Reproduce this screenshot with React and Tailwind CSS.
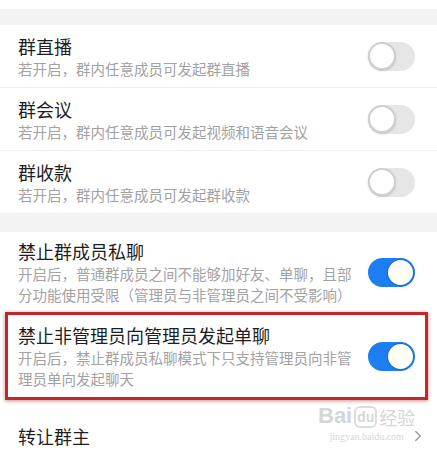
import { ChevronRight } from "lucide-react";

const rows = [
  { title: "群直播", desc: ["若开启，群内任意成员可发起群直播"], h: "h-[63px]" },
  { title: "群会议", desc: ["若开启，群内任意成员可发起视频和语音会议"], h: "h-[63px]" },
  { title: "群收款", desc: ["若开启，群内任意成员可发起群收款"], h: "h-[62px]", last: true },
];

function Toggle({ on }) {
  return on ? (
    <div className="w-[47px] h-[29px] rounded-full bg-[#1c7ef0] flex items-center justify-end pr-[2px] shrink-0">
      <div className="w-[25px] h-[25px] rounded-full bg-[#fffdf6] shadow-[0_0_1px_1px_rgba(0,0,0,0.15)]" />
    </div>
  ) : (
    <div className="w-[47px] h-[29px] rounded-full bg-[#e6e6e6] flex items-center shrink-0">
      <div className="w-[28px] h-[28px] rounded-full bg-white border-[2px] border-[#cfcfcf] shadow-[0_1px_2px_rgba(0,0,0,0.15)]" />
    </div>
  );
}

function Row({ title, desc, on, h, divider, className = "" }) {
  return (
    <div
      className={`${h} flex items-center justify-between pl-[18px] pr-[22px] bg-white ${
        divider ? "border-b border-[#efefef]" : ""
      } ${className}`}
    >
      <div className="flex flex-col">
        <div className="text-[18px] leading-[24px] text-[#1e1e1e]">{title}</div>
        {desc.map((d) => (
          <div key={d} className="text-[14.5px] leading-[21px] text-[#a2a2a2]">
            {d}
          </div>
        ))}
      </div>
      <Toggle on={on} />
    </div>
  );
}

export default function App() {
  return (
    <div className="w-[437px] h-[459px] bg-white overflow-hidden relative font-['Noto_Sans_CJK_SC','Noto_Sans',sans-serif]">
      <div className="h-[9px] bg-white" />
      <div className="h-[16px] bg-[#f3f3f3]" />
      {rows.map((r) => (
        <Row key={r.title} title={r.title} desc={r.desc} h={r.h} divider={!r.last} />
      ))}
      <div className="h-[19px] bg-[#f3f3f3]" />
      <Row
        title="禁止群成员私聊"
        desc={["开启后，普通群成员之间不能够加好友、单聊，且部", "分功能使用受限（管理员与非管理员之间不受影响）"]}
        on
        h="h-[80px]"
      />
      <div className="ml-[5px] mr-[9px] h-[88px] border-[3px] border-[#c5262b] shadow-[0_1px_4px_rgba(120,0,0,0.45)] flex flex-col">
        <div className="flex-1 flex items-center justify-between pl-[10px] pr-[10px] bg-white">
          <div className="flex flex-col">
            <div className="text-[18px] leading-[24px] text-[#1e1e1e]">禁止非管理员向管理员发起单聊</div>
            <div className="text-[14.5px] leading-[21px] text-[#a2a2a2]">开启后，禁止群成员私聊模式下只支持管理员向非管</div>
            <div className="text-[14.5px] leading-[21px] text-[#a2a2a2]">理员单向发起聊天</div>
          </div>
          <Toggle on />
        </div>
      </div>
      <div className="h-[59px] flex items-center justify-between pl-[18px] pr-[10px] pt-[12px]">
        <div className="text-[18px] leading-[24px] text-[#1e1e1e]">转让群主</div>
        <ChevronRight size={18} strokeWidth={1.8} className="text-[#9a9a9a]" />
      </div>
      <div className="absolute left-[318px] top-[404px] flex flex-col items-center text-[#d6d6d6] pointer-events-none">
        <div className="flex items-end gap-[2px] font-['Liberation_Sans','Noto_Sans_CJK_SC',sans-serif]">
          <span className="text-[22px] leading-[24px] font-bold">Bai</span>
          <span className="text-[14px] leading-[18px] font-bold rounded-[6px] border-[2px] border-[#dcdcdc] px-[1px]">du</span>
          <span className="text-[18px] leading-[22px] font-['Noto_Sans_CJK_SC',sans-serif]">经验</span>
        </div>
        <div className="text-[10px] leading-[14px] mt-[2px] font-['Liberation_Serif',serif]">jingyan.baidu.com</div>
      </div>
    </div>
  );
}
